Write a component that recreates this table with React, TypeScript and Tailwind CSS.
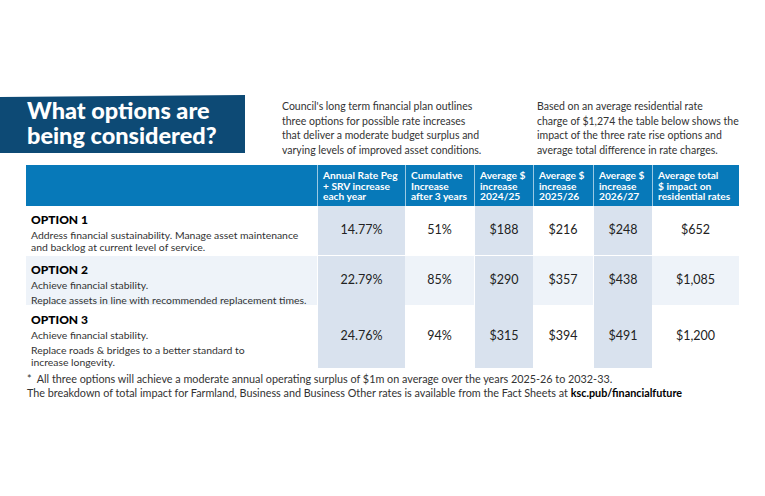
import React from "react";

const font = { fontFamily: "Lato, 'Open Sans', sans-serif" };

interface OptionRow {
  title: string;
  lines: string[][];
  values: string[];
}

const rows: OptionRow[] = [
  {
    title: "OPTION 1",
    lines: [["Address financial sustainability. Manage asset maintenance", "and backlog at current level of service."]],
    values: ["14.77%", "51%", "$188", "$216", "$248", "$652"],
  },
  {
    title: "OPTION 2",
    lines: [["Achieve financial stability."], ["Replace assets in line with recommended replacement times."]],
    values: ["22.79%", "85%", "$290", "$357", "$438", "$1,085"],
  },
  {
    title: "OPTION 3",
    lines: [["Achieve financial stability."], ["Replace roads & bridges to a better standard to", "increase longevity."]],
    values: ["24.76%", "94%", "$315", "$394", "$491", "$1,200"],
  },
];

const headers = [
  ["Annual Rate Peg", "+ SRV increase", "each year"],
  ["Cumulative", "Increase", "after 3 years"],
  ["Average $", "increase", "2024/25"],
  ["Average $", "increase", "2025/26"],
  ["Average $", "increase", "2026/27"],
  ["Average total", "$ impact on", "residential rates"],
];

const rowHeights = ["h-[49px]", "h-[50px]", "h-[63px]"];

export default function App() {
  return (
    <div className="w-[765px] h-[496px] bg-white text-[#222] overflow-hidden" style={font}>
      <div className="flex pt-[95px]">
        <div className="w-[245px] h-[58px] shrink-0 bg-[#0d4a75] pl-[27px] pt-[3px] [clip-path:polygon(0_2px,100%_0,100%_100%,0_100%)]">
          <h1 className="text-white font-black text-[23.5px] leading-[25px] whitespace-nowrap">
            What options are
            <br />
            being considered?
          </h1>
        </div>
        <p className="ml-[37px] mt-[4px] w-[240px] text-[10.5px] leading-[14.7px] text-[#333]">
          Council's long term financial plan outlines
          <br />
          three options for possible rate increases
          <br />
          that deliver a moderate budget surplus and
          <br />
          varying levels of improved asset conditions.
        </p>
        <p className="ml-[15px] mt-[4px] w-[220px] text-[10.5px] leading-[14.7px] text-[#333]">
          Based on an average residential rate
          <br />
          charge of $1,274 the table below shows the
          <br />
          impact of the three rate rise options and
          <br />
          average total difference in rate charges.
        </p>
      </div>

      <div className="ml-[26px] mt-[7px] w-[713px]">
        <div className="grid grid-cols-[291px_88px_69px_59px_60px_59px_87px] h-[41px] bg-[#0779b9]">
          <div />
          {headers.map((h, i) => (
            <div key={i} className="border-l border-white/60 pl-[5px] pt-[5px] text-white font-bold text-[10.2px] leading-[10.8px]">
              {h.map((l, j) => (
                <div key={j} className="whitespace-nowrap">{l}</div>
              ))}
            </div>
          ))}
        </div>
        {rows.map((r, ri) => (
          <div
            key={ri}
            className={`grid grid-cols-[291px_88px_69px_59px_60px_59px_87px] ${rowHeights[ri]} ${ri === 1 ? "bg-[#eef3f9]" : "bg-white"} ${ri > 0 ? "border-t border-white" : ""}`}
          >
            <div className="pl-[5px] pt-[7px]">
              <div className="font-black text-[12px] leading-[14px] text-black">{r.title}</div>
              <div className="mt-[2px] text-[10.4px] leading-[12px] text-[#333] space-y-[3px]">
                {r.lines.map((para, pi) => (
                  <div key={pi}>
                    {para.map((l, li) => (
                      <div key={li} className="whitespace-nowrap">{l}</div>
                    ))}
                  </div>
                ))}
              </div>
            </div>
            {r.values.map((v, vi) => (
              <div
                key={vi}
                className={`flex items-center justify-center text-[12.5px] ${vi % 2 === 0 && vi < 5 ? "bg-[#d9e2ee] border-l border-white" : ""}`}
              >
                {v}
              </div>
            ))}
          </div>
        ))}
      </div>

      <div className="ml-[27px] mt-[4px] text-[10.8px] leading-[14px] text-[#333] whitespace-nowrap">
        <p>*&nbsp; All three options will achieve a moderate annual operating surplus of $1m on average over the years 2025-26 to 2032-33.</p>
        <p>
          The breakdown of total impact for Farmland, Business and Business Other rates is available from the Fact Sheets at{" "}
          <span className="font-bold text-black">ksc.pub/financialfuture</span>
        </p>
      </div>
    </div>
  );
}
